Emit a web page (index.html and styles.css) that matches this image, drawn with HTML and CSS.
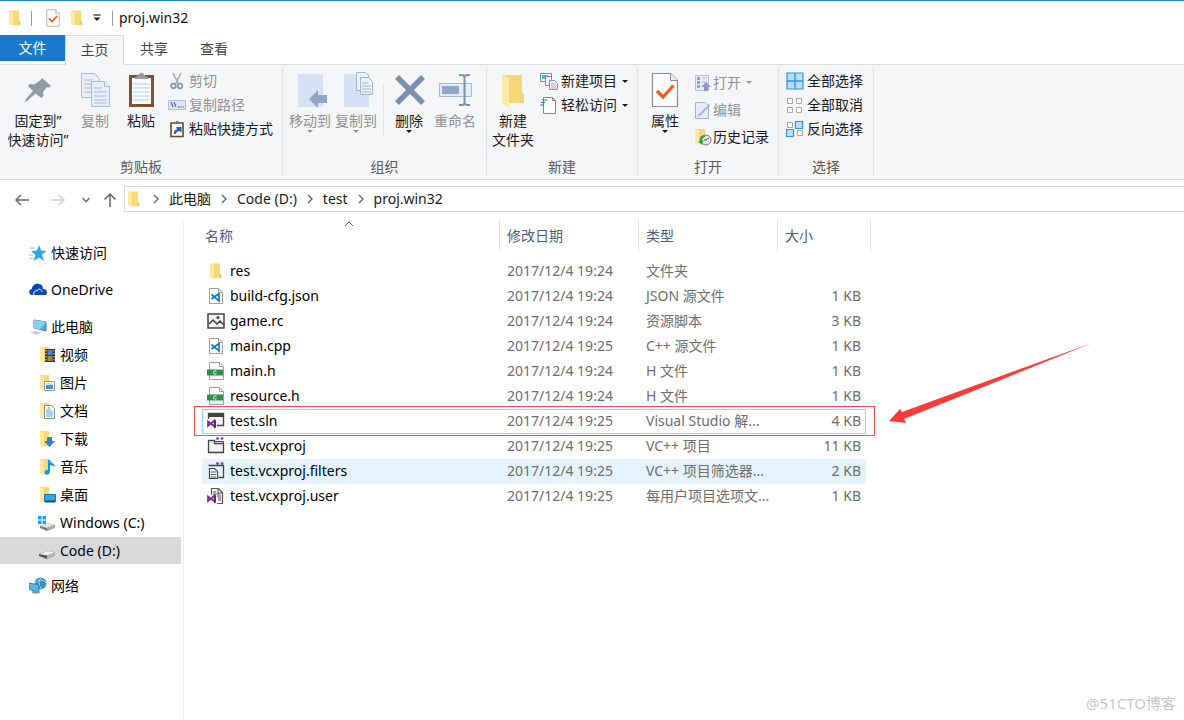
FILE: index.html
```html
<!DOCTYPE html>
<html lang="zh-CN">
<head>
<meta charset="utf-8">
<title>proj.win32</title>
<link rel="stylesheet" href="styles.css">
</head>
<body>
<svg class="defs" aria-hidden="true">
  <symbol id="folder" viewBox="0 0 18 18">
    <path d="M3 1.500h10v12h1.500v2.500H5z" fill="#f8d775"/>
    <path d="M3 1.500l4 1.500v14l-4-2z" fill="#ffe9a2"/>
    <path d="M12.500 12h1.500v4h-1.500z" fill="#eec65c"/>
  </symbol>
  <symbol id="lib" viewBox="0 0 18 18">
    <path d="M2 1h9v15H4z" fill="#f8d775"/>
    <path d="M2 1l4 1.500V17l-4-1.500z" fill="#ffe9a2"/>
  </symbol>
  <symbol id="check" viewBox="0 0 28 36">
    <path d="M1.500 1.500h18l7 7v26h-25z" fill="#fcfcfc" stroke="#8e8e8e" stroke-width="1.200"/>
    <path d="M19.500 1.500v7h7" fill="#eee" stroke="#8e8e8e"/>
    <path d="M6 19l6 6L22.500 13.500" fill="none" stroke="#ee5a1c" stroke-width="3.200"/>
  </symbol>
  <symbol id="vscode" viewBox="0 0 18 18">
    <path d="M2.500 1.500h9l4 4v11h-13z" fill="#fff" stroke="#a0a0a0"/>
    <path d="M11.500 1.500v4h4" fill="none" stroke="#a0a0a0"/>
    <path d="M4.500 7.500l7.500 6.500V6.500L4.500 12" fill="none" stroke="#1279cc" stroke-width="1.700"/>
  </symbol>
  <symbol id="hfile" viewBox="0 0 18 18">
    <path d="M2.500 0.500h10l4 4v13h-14z" fill="#fff" stroke="#a0a0a0"/>
    <path d="M12.500 .5v4h4" fill="none" stroke="#a0a0a0"/>
    <path d="M0 7.500h16v6H0z" fill="#2c8f4b"/>
    <path d="M9.500 9.200c-2-.8-3 .2-3 1.300s1 2.100 3 1.300" fill="none" stroke="#fff"/>
  </symbol>
  <symbol id="vs" viewBox="0 0 10 10">
    <path d="M1 2.500l6.500 5V1.500L1 7z" fill="none" stroke="#7b2f96" stroke-width="1.700"/>
    <path d="M7 .5l2 1v7l-2 1z" fill="#68217a"/>
  </symbol>
</svg>

<header class="titlebar">
  <svg class="ico"><use href="#folder"/></svg>
  <span class="bar"></span>
  <button class="plain" aria-label="属性"><svg class="ico"><use href="#check"/></svg></button>
  <button class="plain" aria-label="新建文件夹"><svg class="ico"><use href="#folder"/></svg></button>
  <button class="plain more" aria-label="自定义快速访问工具栏"><svg width="8" height="8" viewBox="0 0 8 8"><path d="M.5 1h7" stroke="#222" stroke-width="1.200"/><path d="M.5 3.500h7L4 7z" fill="#222"/></svg></button>
  <span class="bar last"></span>
  <h1>proj.win32</h1>
</header>

<nav class="tabs">
  <button class="tab file">文件</button>
  <button class="tab active">主页</button>
  <button class="tab">共享</button>
  <button class="tab">查看</button>
</nav>

<section class="ribbon">
  <div class="group clip">
    <div class="tools">
      <button class="big wide">
        <svg viewBox="0 0 36 36"><path d="M22 6l9 8-2 1.500-2-.5-4 5 .5 4-2 2-6-4.500L7 29l-2.500 1L6 27l7-8-5-5 2-2 4 .5 6-4z" fill="#8f9aa3"/></svg>
        <span>固定到”<br>快速访问”</span>
      </button>
      <button class="big narrow off">
        <svg viewBox="0 0 36 36"><g fill="#e9eff9" stroke="#a7b9d8"><path d="M4.500 1.500h13l5 5v19h-18z"/><path d="M7 8h9M7 12h12M7 16h12M7 20h12"/><path d="M14.500 9.500h13l5 5v20h-18z"/><path d="M27.500 9.500v5h5M17 16h8M17 20h13M17 24h13M17 28h13M17 31h13"/></g></svg>
        <span>复制</span>
      </button>
      <button class="big mid">
        <svg viewBox="0 0 36 36"><path d="M6 3h25v32H6z" fill="#81502c"/><path d="M9 6h19v26H9z" fill="#f8fbfe"/><path d="M10 12h17M10 16h17M10 20h17M10 24h17M10 28h17" stroke="#a8cde5"/><path d="M12 7c0-3 3-3 4-4 0-3 5-3 5 0 1 1 4 1 4 4z" fill="#9a9a9a"/></svg>
        <span>粘贴</span>
      </button>
      <div class="list">
        <button class="small off"><svg viewBox="0 0 18 18"><path d="M5 1l5.500 11M13 1L7.500 12" stroke="#a3adba" stroke-width="1.600"/><g fill="none" stroke="#8096bf" stroke-width="1.700"><circle cx="5.500" cy="14" r="2.300"/><circle cx="12" cy="14" r="2.300"/></g></svg>剪切</button>
        <button class="small off"><svg viewBox="0 0 18 18"><path d="M.5 4.500h17v9H.5z" fill="#dbe6f7" stroke="#a9bcdc"/><path d="M3 6l2 5M6 6l2 5M10 11h1.500M12.500 11h1M14.500 11h1" stroke="#5a6f95" stroke-width="1.300"/></svg>复制路径</button>
        <button class="small"><svg viewBox="0 0 18 18"><path d="M3 3h12v13.500H3z" fill="#fff" stroke="#6f4425" stroke-width="1.600"/><path d="M6 4c0-2 1-2 2-2.500 1-1 1.500-1 2 0 1 .5 2 .5 2 2.500z" fill="#777"/><path d="M6 14c-.5-3 1-4.500 3-4.800L8 7h5.500v5.500l-2-1.500C9.500 11 8 12 8 14z" fill="#2464b0"/></svg>粘贴快捷方式</button>
      </div>
    </div>
    <h2>剪贴板</h2>
  </div>

  <div class="group org">
    <div class="tools">
      <button class="big off">
        <svg viewBox="0 0 36 36"><path d="M6 2h25v33H6z" fill="#d5e1f4"/><path d="M17 27l9-9v5h9v8h-9v5z" fill="#91a3c0"/></svg>
        <span>移动到</span><i class="caret"></i>
      </button>
      <button class="big off">
        <svg viewBox="0 0 36 36"><path d="M6 2h25v33H6z" fill="#d5e1f4"/><g fill="#eef3fb" stroke="#a0b2d0"><path d="M18.500.5h9l3 3v15h-12z"/><path d="M22.500 5.500h8l4 4v13h-12z"/><path d="M24 11h6M24 14h9M24 17h9M24 20h9"/></g></svg>
        <span>复制到</span><i class="caret"></i>
      </button>
      <span class="split"></span>
      <button class="big">
        <svg viewBox="0 0 36 36"><path d="M6 5l26 26M32 5L6 31" stroke="#7b8fb0" stroke-width="5.500"/></svg>
        <span>删除</span><i class="caret"></i>
      </button>
      <button class="big off">
        <svg viewBox="0 0 36 36"><path d="M2.500 11.500h32v13h-32z" fill="#e3ecfa" stroke="#a6b8d6"/><path d="M5 14h17v8H5z" fill="#91a5c8"/><path d="M22 3c4 0 5 0 5.500 2C28 3 29 3 33 3M27.500 4v28M22 33c4 0 5 0 5.500-2 .5 2 1.500 2 5.500 2" fill="none" stroke="#7a8eae" stroke-width="2"/></svg>
        <span>重命名</span>
      </button>
    </div>
    <h2>组织</h2>
  </div>

  <div class="group new">
    <div class="tools">
      <button class="big">
        <svg viewBox="0 0 36 36"><path d="M7 3h20v18h2v10H9z" fill="#f7d677"/><path d="M7 3l7 3v29l-7-3z" fill="#ffe9a8"/></svg>
        <span>新建<br>文件夹</span>
      </button>
      <div class="list">
        <button class="small"><svg viewBox="0 0 18 18"><path d="M.5 1.500h11v8H.5z" fill="#fff" stroke="#4b9bc4"/><path d="M2 3h6v4H2z" fill="#5bb0db"/><path d="M5.500 4.500h6v9h-6z" fill="#f3f3f3" stroke="#888"/><path d="M9.500 8.500h5l3 3v6h-8z" fill="#eef3fb" stroke="#8193b5"/><path d="M11 12h5M11 14h5M11 16h5" stroke="#d8a2a2"/></svg>新建项目<i class="caret"></i></button>
        <button class="small"><svg viewBox="0 0 18 18"><path d="M3.500 1.500h9l3 3v13h-12z" fill="#fff" stroke="#858585"/><path d="M12.500 1.500v3h3" fill="none" stroke="#858585"/><path d="M2 4h5M1 6.500h4M0 9h4" stroke="#2274b8" stroke-width="1.200"/></svg>轻松访问<i class="caret"></i></button>
      </div>
    </div>
    <h2>新建</h2>
  </div>

  <div class="group open">
    <div class="tools">
      <button class="big">
        <svg viewBox="-4 0 36 36"><use href="#check" width="28" height="36"/></svg>
        <span>属性</span><i class="caret"></i>
      </button>
      <div class="list loose">
        <button class="small off"><svg viewBox="0 0 18 18"><path d="M1.500 1.500h13v15h-13z" fill="#e5edf9" stroke="#afc0dc"/><path d="M3 3h3v3H3zM3 7h3v3H3zM3 11h3v3H3z" fill="#8ba0c3"/><path d="M8 4h5M8 8h5" stroke="#afc0dc"/><path d="M12 8l5 5h-3v4h-4v-4H7z" fill="#8b9dbd"/></svg>打开<i class="caret"></i></button>
        <button class="small off"><svg viewBox="0 0 18 18"><path d="M1.500 1.500h10l3 3v13h-13z" fill="#e5edf9" stroke="#a0b3d3"/><path d="M4 14L15 3l1.500 1.500L6 15l-3 1z" fill="#a4b6d3"/></svg>编辑</button>
        <button class="small"><svg viewBox="0 0 18 18"><path d="M1 1h10v13H1z" fill="#f7d677"/><path d="M1 1l4 1.500V17l-4-1.500z" fill="#ffe9a8"/><circle cx="12" cy="12" r="5" fill="#e7e7e7" stroke="#777"/><path d="M12 12l3-2M12 12h-2" stroke="#444"/><path d="M11 7c-4 0-6 3-5 6l-2 .5L8 17l1.500-5-1.500.5c0-2 1-3 3-3.500z" fill="#20a63a"/></svg>历史记录</button>
      </div>
    </div>
    <h2>打开</h2>
  </div>

  <div class="group pick">
    <div class="tools">
      <div class="list">
        <button class="small"><svg viewBox="0 0 18 18"><path d="M1 1h16v16H1z" fill="#b9e0fa" stroke="#2f94dd" stroke-width="1.200"/><path d="M9 1v16M1 9h16" stroke="#2f94dd" stroke-width="1.400"/></svg>全部选择</button>
        <button class="small"><svg viewBox="0 0 18 18"><path d="M1.500 2.500h5v5h-5zM10.500 2.500h5v5h-5zM1.500 11.500h5v5h-5zM10.500 11.500h5v5h-5z" fill="#fff" stroke="#a9a9a9"/></svg>全部取消</button>
        <button class="small"><svg viewBox="0 0 18 18"><path d="M1.500 2.500h5v5h-5zM11.500 10.500h5v5h-5z" fill="#fff" stroke="#a9a9a9"/><path d="M9.500 1.500h7v7h-7zM.5 9.500h7v7h-7z" fill="#b9e0fa" stroke="#2f94dd" stroke-width="1.200"/></svg>反向选择</button>
      </div>
    </div>
    <h2>选择</h2>
  </div>
</section>

<nav class="address">
  <div class="history">
    <button class="plain" aria-label="后退"><svg width="16" height="16" viewBox="0 0 16 16"><path d="M15 8H2M7 3L2 8l5 5" fill="none" stroke="#666" stroke-width="1.500"/></svg></button>
    <button class="plain" aria-label="前进"><svg width="16" height="16" viewBox="0 0 16 16"><path d="M1 8h13M9 3l5 5-5 5" fill="none" stroke="#d2d2d2" stroke-width="1.500"/></svg></button>
    <button class="plain" aria-label="最近浏览的位置"><svg width="8" height="16" viewBox="0 0 8 16"><path d="M.5 6L4 9.500 7.500 6" fill="none" stroke="#777" stroke-width="1.600"/></svg></button>
    <button class="plain" aria-label="上移"><svg width="16" height="16" viewBox="0 0 16 16"><path d="M8 15V2M2.500 7.500L8 2l5.500 5.500" fill="none" stroke="#666" stroke-width="1.500"/></svg></button>
  </div>
  <div class="path">
    <svg class="ico"><use href="#folder"/></svg>
    <svg class="chev" viewBox="0 0 6 10"><path d="M1 1l4 4-4 4"/></svg><a href="#">此电脑</a>
    <svg class="chev" viewBox="0 0 6 10"><path d="M1 1l4 4-4 4"/></svg><a href="#">Code (D:)</a>
    <svg class="chev" viewBox="0 0 6 10"><path d="M1 1l4 4-4 4"/></svg><a href="#">test</a>
    <svg class="chev" viewBox="0 0 6 10"><path d="M1 1l4 4-4 4"/></svg><a href="#">proj.win32</a>
  </div>
</nav>

<main>
  <aside>
    <a href="#"><svg class="ico" viewBox="0 0 18 18"><path d="M10 1l2 5.500 5.500.5-4.500 3.500L15 17l-5-3.500L4.500 17l2-6L2 7l6-.5z" fill="#2ba6e8"/><path d="M1 4h5M0 11h4M1 14.500h3" stroke="#7cc8f0"/></svg>快速访问</a>
    <a href="#"><svg class="ico" viewBox="0 0 18 18"><path d="M1 13c-2-3 0-5 2-5 0-3 3-6 7-5 3 0 4 3 4 5 4 0 5 4 3 6H2z" fill="#0b4aa8"/><path d="M5 14c-1-3 1-5 3-4 1-3 5-2 5 1" fill="none" stroke="#fff"/></svg>OneDrive</a>
    <a href="#"><svg class="ico" viewBox="0 0 18 18"><path d="M5 2l12 2v9L5 10z" fill="#3fb0e8" stroke="#5d7c8d"/><path d="M5 2l12 2-6 7.500L5 10z" fill="#87d2f5"/><path d="M1 14l6-1 6 2-6 2z" fill="#c5ccd1"/></svg>此电脑</a>
    <div class="children">
      <a href="#"><svg class="ico" viewBox="0 0 18 18"><use href="#lib"/><path d="M7 3h10v13H7z" fill="#333"/><path d="M9.500 4h5v5h-5z" fill="#4b83cf"/><path d="M9.500 10h5v5h-5z" fill="#a98546"/><path d="M8 4v12M16 4v12" stroke="#ddd" stroke-dasharray="1.500 1.500"/></svg>视频</a>
      <a href="#"><svg class="ico" viewBox="0 0 18 18"><use href="#lib"/><path d="M6.500 7.500h10v9h-10z" fill="#fff" stroke="#999"/><path d="M8 11h7v4H8z" fill="#4c91cc"/><path d="M8 9h7v2H8z" fill="#cce7f7"/></svg>图片</a>
      <a href="#"><svg class="ico" viewBox="0 0 18 18"><use href="#lib"/><path d="M6.500 3.500h7l3 3v10h-10z" fill="#fff" stroke="#888"/><path d="M10 6h2M8 8h5M8 10h7M8 12h7M8 14h7" stroke="#4ca1d4"/></svg>文档</a>
      <a href="#"><svg class="ico" viewBox="0 0 18 18"><use href="#lib"/><path d="M9 7h5v4h3l-5.500 6L6 11h3z" fill="#2d82ce"/></svg>下载</a>
      <a href="#"><svg class="ico" viewBox="0 0 18 18"><use href="#lib"/><path d="M10 2h2c0 3 5 3 5 7-1-1-3-2-5-2v7c-1 4-6 3-5.500 0C7 12 9 11.500 10 12z" fill="#109be2"/></svg>音乐</a>
      <a href="#"><svg class="ico" viewBox="0 0 18 18"><use href="#lib"/><path d="M6.500 8.500h11v7h-11z" fill="#2aa9ed" stroke="#1373af"/><path d="M7 15.500h10" stroke="#14537e" stroke-width="2"/></svg>桌面</a>
      <a href="#"><svg class="ico" viewBox="0 0 18 18"><path d="M2 12l8-2.500 7 1.500v2.500L9 17l-7-3z" fill="#777"/><path d="M2 12l8-2.500 7 1.500-8 3z" fill="#e4e4e4"/><path d="M9 14l8-3v2.500L9 17z" fill="#aaa"/><path d="M0 2h3.500v3.500H0zM4.500 2H8v3.500H4.500zM0 6.500h3.500V10H0zM4.500 6.500H8V10H4.500z" fill="#12a5e8"/></svg>Windows (C:)</a>
      <a href="#" class="selected"><svg class="ico" viewBox="0 0 18 18"><path d="M1 12l9-3 7 1.500v3L9 17l-8-3z" fill="#555"/><path d="M1 12l9-3 7 1.500-8 3z" fill="#f1f1f1"/><path d="M9 13.500l8-3v3L9 17z" fill="#b5b5b5"/></svg>Code (D:)</a>
    </div>
    <a href="#"><svg class="ico" viewBox="0 0 18 18"><circle cx="11.500" cy="6.500" r="6" fill="#3b91c4"/><path d="M6 6c3-4 8-4 11 0M12 .5c-3 4-2 9 1 12" fill="none" stroke="#a9d9ef"/><path d="M0 6l10 2v8L0 12z" fill="#53b8ec" stroke="#487f9d"/><path d="M3 15l5 1" stroke="#88989f" stroke-width="2"/></svg>网络</a>
  </aside>

  <section class="files">
    <table>
      <colgroup><col class="c-name"><col class="c-mid"><col class="c-mid"><col class="c-size"><col class="c-end"></colgroup>
      <thead>
        <tr>
          <th><span>名称<svg class="sort" viewBox="0 0 10 6"><path d="M1 5l4-4 4 4" fill="none" stroke="#666"/></svg></span></th>
          <th><span>修改日期</span></th>
          <th><span>类型</span></th>
          <th colspan="2"><span>大小</span></th>
        </tr>
      </thead>
      <tbody>
        <tr><td><div><svg class="ico"><use href="#folder"/></svg>res</div></td><td>2017/12/4 19:24</td><td>文件夹</td><td></td></tr>
        <tr><td><div><svg class="ico"><use href="#vscode"/></svg>build-cfg.json</div></td><td>2017/12/4 19:24</td><td>JSON 源文件</td><td>1 KB</td></tr>
        <tr><td><div><svg class="ico" viewBox="0 0 18 18"><path d="M1 2h16v14H1z" fill="#f3f3f3" stroke="#444" stroke-width="1.500"/><path d="M2 12l4-4 4 4 3-3 4 4" fill="none" stroke="#444" stroke-width="1.500"/><circle cx="11" cy="5.500" r="1.500" fill="#444"/></svg>game.rc</div></td><td>2017/12/4 19:24</td><td>资源脚本</td><td>3 KB</td></tr>
        <tr><td><div><svg class="ico"><use href="#vscode"/></svg>main.cpp</div></td><td>2017/12/4 19:25</td><td>C++ 源文件</td><td>1 KB</td></tr>
        <tr><td><div><svg class="ico"><use href="#hfile"/></svg>main.h</div></td><td>2017/12/4 19:24</td><td>H 文件</td><td>1 KB</td></tr>
        <tr><td><div><svg class="ico"><use href="#hfile"/></svg>resource.h</div></td><td>2017/12/4 19:24</td><td>H 文件</td><td>1 KB</td></tr>
        <tr class="focus"><td><div><svg class="ico" viewBox="0 0 18 18"><path d="M1.500 1.500h15v12h-15z" fill="#f5f5f5" stroke="#444" stroke-width="1.400"/><path d="M1 1h16v4H1z" fill="#444"/><path d="M0 7h10v10H0z" fill="#fff"/><use href="#vs" x="0" y="7" width="10" height="10"/></svg>test.sln</div></td><td>2017/12/4 19:25</td><td>Visual Studio 解...</td><td>4 KB</td></tr>
        <tr><td><div><svg class="ico" viewBox="0 0 18 18"><path d="M1.500 3.500h6v3h9v9h-15z" fill="#f1f1f1" stroke="#444" stroke-width="1.300"/><path d="M7.500 4.500h9v2" fill="none" stroke="#444"/><path d="M9 1.500h3M10.500 0v3M13.500 1.500h3M15 0v3" stroke="#8a4aa0" stroke-width="1.300"/></svg>test.vcxproj</div></td><td>2017/12/4 19:25</td><td>VC++ 项目</td><td>11 KB</td></tr>
        <tr class="hover"><td><div><svg class="ico" viewBox="0 0 18 18"><path d="M1.500 3.500h15v12h-5" fill="none" stroke="#444" stroke-width="1.300"/><path d="M2.500 6.500h5l3 3v7h-8z" fill="#fff" stroke="#444" stroke-width="1.200"/><path d="M4 10h5M4 12.500h5M4 15h5" stroke="#555"/><path d="M9 1.500h3M10.500 0v3M13.500 1.500h3M15 0v3" stroke="#8a4aa0" stroke-width="1.300"/></svg>test.vcxproj.filters</div></td><td>2017/12/4 19:25</td><td>VC++ 项目筛选器...</td><td>2 KB</td></tr>
        <tr><td><div><svg class="ico" viewBox="0 0 18 18"><path d="M4.500 1.500h7l4 4v11h-11z" fill="#f5f5f5" stroke="#555" stroke-width="1.200"/><path d="M11 2v4h4M6 5h3M6 7h7M9 9h5M11 11h3M11 13h3" fill="none" stroke="#555"/><path d="M0 8h10v9H0z" fill="#fff"/><use href="#vs" x="0" y="7" width="10" height="10"/></svg>test.vcxproj.user</div></td><td>2017/12/4 19:25</td><td>每用户项目选项文...</td><td>1 KB</td></tr>
      </tbody>
    </table>
    <div class="mark"></div>
    <svg class="arrow" width="206" height="84" viewBox="0 0 206 84"><path d="M204 1L14 70l-2-3L1 79l17 2-2-4Z" fill="#fc3a39"/></svg>
    <p class="watermark">@51CTO博客</p>
  </section>
</main>
</body>
</html>
```

FILE: styles.css
```css
* { box-sizing: border-box; }

body {
  margin: 0;
  min-height: 100vh;
  display: flex;
  flex-direction: column;
  border-top: 1px solid #1a7fd0;
  background: #fff;
  color: #1a1a1a;
  font: 14px/20px "Noto Sans", "Noto Sans CJK SC", sans-serif;
}

button {
  margin: 0;
  padding: 0;
  border: 0;
  background: none;
  color: inherit;
  font: inherit;
}

a { color: inherit; text-decoration: none; }
h1, h2, p { margin: 0; font-size: 14px; font-weight: 400; }
svg { display: block; flex: none; }
.defs { position: absolute; width: 0; height: 0; }
.ico { width: 18px; height: 18px; }
.plain { display: flex; }

.titlebar {
  display: flex;
  align-items: center;
  height: 34px;
  padding-left: 6px;
  gap: 6px;
}
.titlebar .bar { width: 1px; height: 15px; margin: 0 6px 0 1px; background: #999; }
.titlebar .bar.last { margin: 0; }
.titlebar .more { margin: 0 5px 0 1px; }
.titlebar h1 { color: #111; }

.tabs { display: flex; height: 30px; border-bottom: 1px solid #dadbdc; }
.tab { width: 60px; height: 28px; color: #444; }
.tab.file { width: 65px; height: 26px; background: #1979ca; color: #fff; }
.tab.active {
  width: 59px;
  height: 30px;
  padding-bottom: 2px;
  border: 1px solid #dadbdc;
  border-bottom: 0;
  background: #f5f6f7;
}

.ribbon {
  display: flex;
  height: 115px;
  padding: 2px 0;
  border-bottom: 1px solid #dadbdc;
  background: #f5f6f7;
}
.group {
  display: flex;
  flex-direction: column;
  justify-content: space-between;
  border-right: 1px solid #e2e3e4;
}
.group h2 { color: #5a5a5a; text-align: center; }
.tools { display: flex; padding-top: 2px; }
.clip .tools { padding-right: 9px; }
.org .tools { padding: 2px 8px 0 4px; }
.new .tools { padding: 2px 9px 0 3px; }
.open .tools { padding: 2px 9px 0 4px; }
.pick .tools { padding: 2px 10px 0 7px; }

.big {
  display: flex;
  flex-direction: column;
  align-items: center;
  width: 46px;
  padding-top: 3px;
  line-height: 19px;
  white-space: nowrap;
}
.big svg { width: 36px; height: 36px; margin-bottom: 3px; }
.big.wide { width: 76px; }
.big.narrow { width: 38px; }
.big.mid { width: 54px; }
.off { color: #929292; }
.split { width: 1px; height: 52px; margin: 15px 2px 0 4px; background: #e2e3e4; }

.caret { border: 3px solid transparent; border-top-color: currentColor; border-bottom: 0; }

.list { display: flex; flex-direction: column; }
.small { display: flex; align-items: center; gap: 3px; height: 24px; white-space: nowrap; }
.small svg { width: 18px; height: 18px; }
.small .caret { margin-left: 2px; }
.new .list { padding-left: 4px; }
.open .list { padding-left: 6px; }
.loose .small { height: 27px; gap: 1px; }
.loose .caret { margin-left: 4px; }

.address { display: flex; align-items: flex-start; height: 40px; padding-top: 6px; }
.history { display: flex; align-items: center; gap: 16px; width: 124px; height: 28px; padding-left: 14px; }
.history .plain:nth-child(2) { margin-left: 4px; }
.history .plain:last-child { margin-left: -4px; }
.path {
  flex: 1;
  display: flex;
  align-items: center;
  gap: 10px;
  height: 26px;
  border: 1px solid #d9d9d9;
  border-right: 0;
}
.chev { width: 6px; height: 10px; fill: none; stroke: #666; stroke-width: 1.4; }

main { flex: 1; display: flex; }
aside { width: 184px; padding: 19px 2px 0 0; border-right: 1px solid #f0f0f0; color: #000; }
aside a { display: flex; align-items: center; gap: 4px; height: 28px; padding-left: 29px; margin-bottom: 9px; }
.children { margin: -9px 0 8px; }
.children a { margin: 0; padding-left: 38px; }
aside .selected { height: 27px; background: #d9d9d9; }

.files { flex: 1; position: relative; padding-left: 18px; }
table { width: 669px; border-collapse: separate; border-spacing: 0; table-layout: fixed; }
.c-name { width: 298px; }
.c-mid { width: 139px; }
.c-size { width: 88px; }
.c-end { width: 5px; }
th, td { padding: 0; font-weight: 400; text-align: left; white-space: nowrap; }
th { padding-bottom: 8px; color: #4c607a; }
th span {
  position: relative;
  display: flex;
  align-items: center;
  height: 31px;
  padding-left: 7px;
  border-right: 1px solid #e0e0e0;
}
th:first-child span { padding-left: 3px; }
.sort { position: absolute; top: 1px; left: 142px; width: 10px; height: 6px; }
td { height: 25px; padding: 0 0 1px 7px; border: solid transparent; border-width: 1px 0; line-height: 22px; color: #6d6d6d; }
td:first-child { padding-left: 5px; color: #000; }
td:last-child { padding: 0 5px 1px 0; text-align: right; }
td div { display: flex; align-items: center; gap: 5px; }
.hover td { background: #e5f3ff; border-color: #e5f3ff; }
.focus td { border-color: #99d1ff; }
.focus td:first-child { border-left: 1px solid #99d1ff; padding-left: 4px; }
.focus td:last-child { border-right: 1px solid #99d1ff; padding-right: 4px; }

.mark { position: absolute; left: 10px; top: 186px; width: 681px; height: 30px; border: 1px solid #f54a4a; }
.arrow { position: absolute; left: 704px; top: 122px; }
.watermark { position: absolute; right: 8px; bottom: 7px; font-size: 15px; color: #c8c8c8; }
```
